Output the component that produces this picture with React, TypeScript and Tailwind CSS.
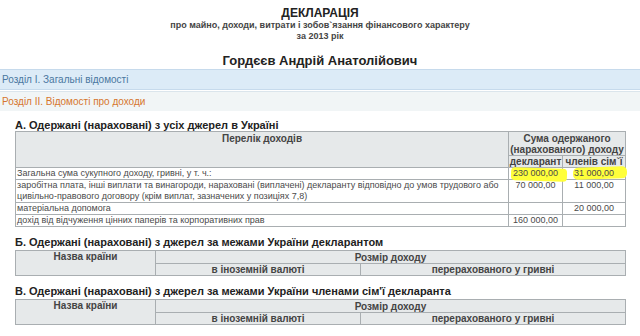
import React from 'react';

const th = "border border-[#a9aeb1] bg-[#e6e9ea] text-[#444] font-bold text-[10px] leading-[11px] text-center p-0 whitespace-nowrap";
const td = "border border-[#a9aeb1] text-[#4a4a4a] text-[9px] leading-[11px] p-0 align-top whitespace-nowrap";

const rows: { name: React.ReactNode; dec: string; fam: string; mark?: boolean; tall?: boolean }[] = [
  { name: "Загальна сума сукупного доходу, гривні, у т. ч.:", dec: "230 000,00", fam: "31 000,00", mark: true },
  {
    name: (
      <>
        заробітна плата, інші виплати та винагороди, нараховані (виплачені) декларанту відповідно до умов трудового або
        <br />
        цивільно-правового договору (крім виплат, зазначених у позиціях 7,8)
      </>
    ),
    dec: "70 000,00",
    fam: "11 000,00",
    tall: true,
  },
  { name: "матеріальна допомога", dec: "", fam: "20 000,00" },
  { name: "дохід від відчуження цінних паперів та корпоративних прав", dec: "160 000,00", fam: "" },
];

const ForeignTable: React.FC<{ title: string }> = ({ title }) => (
  <div className="mt-[8px]">
    <h3 className="text-[11px] leading-[14px] font-bold text-[#222]">{title}</h3>
    <table className="w-full table-fixed border-collapse mt-[1px]">
      <colgroup>
        <col className="w-[140px]" />
        <col className="w-[205px]" />
        <col />
      </colgroup>
      <tbody>
        <tr className="h-[13px]">
          <td rowSpan={2} className={`${th} align-top`}>Назва країни</td>
          <td colSpan={2} className={th}>Розмір доходу</td>
        </tr>
        <tr className="h-[11px]">
          <td className={th}>в іноземній валюті</td>
          <td className={th}>перерахованого у гривні</td>
        </tr>
      </tbody>
    </table>
  </div>
);

export default function App() {
  return (
    <div className="w-[640px] h-[336px] overflow-hidden bg-white font-['Liberation_Sans',Arial,sans-serif]">
      <div className="text-center pt-[6px]">
        <h1 className="text-[12px] leading-[14px] font-bold text-[#222]">ДЕКЛАРАЦІЯ</h1>
        <p className="text-[9px] leading-[11px] font-bold text-[#444]">про майно, доходи, витрати і зобов`язання фінансового характеру</p>
        <p className="text-[9px] leading-[11px] font-bold text-[#444]">за 2013 рік</p>
        <h2 className="mt-[11px] text-[13px] leading-[15px] font-bold text-[#222]">Гордєєв Андрій Анатолійович</h2>
      </div>

      <div className="mt-[1px] h-[21px] bg-[#dcebf7] border-t border-b border-[#c6daec] flex items-center px-[2px]">
        <span className="text-[10px] text-[#4a77a0]">Розділ І. Загальні відомості</span>
      </div>
      <div className="mt-[1px] h-[20px] bg-[#f1f5f6] border-t border-[#dbe5ec] flex items-center px-[2px]">
        <span className="text-[10px] text-[#d6762e]">Розділ ІІ. Відомості про доходи</span>
      </div>

      <div className="pl-[15px] pr-[14px] pt-[7px]">
        <h3 className="text-[11px] leading-[14px] font-bold text-[#222]">А. Одержані (нараховані) з усіх джерел в Україні</h3>
        <table className="w-full table-fixed border-collapse mt-[-1px]">
          <colgroup>
            <col />
            <col className="w-[54px]" />
            <col className="w-[63px]" />
          </colgroup>
          <tbody>
            <tr className="h-[24px]">
              <td rowSpan={2} className={`${th} align-top pt-[1px]`}>Перелік доходів</td>
              <td colSpan={2} className={`${th} pt-[1px]`}>
                Сума одержаного
                <br />
                (нарахованого) доходу
              </td>
            </tr>
            <tr className="h-[11px]">
              <td className={th}>декларант</td>
              <td className={th}>членів сім`ї</td>
            </tr>
            {rows.map((r, i) => (
              <tr key={i} className={r.tall ? "h-[22px]" : "h-[12px]"}>
                <td className={`${td} pl-[1px]`}>{r.name}</td>
                <td className={`${td} text-center relative`}>
                  {r.mark && (
                    <span className="absolute left-[2px] top-[0px] w-[56px] h-[13px] bg-[#ffff3a] rounded-[4px] rotate-2" />
                  )}
                  <span className="relative">{r.dec}</span>
                </td>
                <td className={`${td} text-center relative`}>
                  {r.mark && (
                    <span className="absolute left-[10px] top-[-1px] w-[54px] h-[12px] bg-[#ffff3a] rounded-[5px] -rotate-2" />
                  )}
                  <span className="relative">{r.fam}</span>
                </td>
              </tr>
            ))}
          </tbody>
        </table>

        <ForeignTable title="Б. Одержані (нараховані) з джерел за межами України декларантом" />
        <ForeignTable title="В. Одержані (нараховані) з джерел за межами України членами сім'ї декларанта" />
      </div>

      <div className="mt-[12px] h-[20px] bg-[#dcebf7] border-t border-[#c6daec]" />
    </div>
  );
}
